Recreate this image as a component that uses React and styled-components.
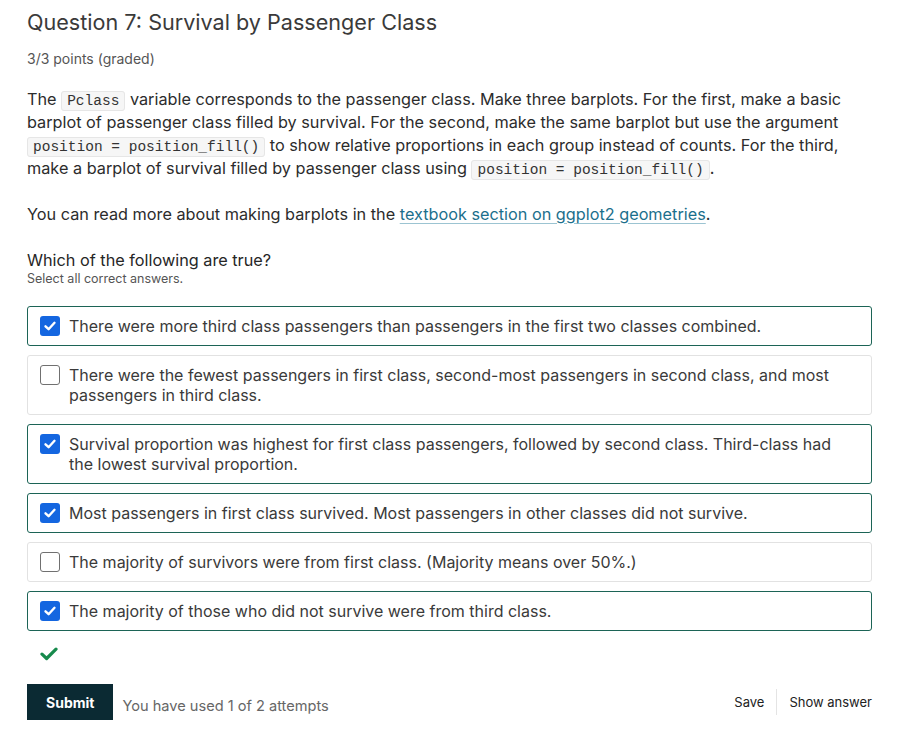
import styled, { createGlobalStyle } from 'styled-components';

const GlobalStyle = createGlobalStyle`
  body {
    margin: 0;
    background: #ffffff;
    font-family: Inter, "Noto Sans", sans-serif;
    color: #2c2c2c;
  }
`;

const options = [
  { id: 1, text: 'There were more third class passengers than passengers in the first two classes combined.', checked: true },
  { id: 2, text: 'There were the fewest passengers in first class, second-most passengers in second class, and most passengers in third class.', checked: false },
  { id: 3, text: 'Survival proportion was highest for first class passengers, followed by second class. Third-class had the lowest survival proportion.', checked: true },
  { id: 4, text: 'Most passengers in first class survived. Most passengers in other classes did not survive.', checked: true },
  { id: 5, text: 'The majority of survivors were from first class. (Majority means over 50%.)', checked: false },
  { id: 6, text: 'The majority of those who did not survive were from third class.', checked: true },
];

const CheckBox = ({ checked }) => (
  <Box $checked={checked}>
    {checked && (
      <svg width="14" height="14" viewBox="0 0 14 14">
        <path d="M2.5 7.3 L5.6 10.2 L11.5 3.8" fill="none" stroke="#fff" strokeWidth="2.4" strokeLinecap="round" strokeLinejoin="round" />
      </svg>
    )}
  </Box>
);

const App = () => {
  return (
    <>
      <GlobalStyle />
      <Wrapper>
        <Title>Question 7: Survival by Passenger Class</Title>
        <Points>3/3 points (graded)</Points>
        <Prose>
          The <Code>Pclass</Code> variable corresponds to the passenger class. Make three barplots. For the first, make a basic
          barplot of passenger class filled by survival. For the second, make the same barplot but use the argument{' '}
          <Code>position = position_fill()</Code> to show relative proportions in each group instead of counts. For the third,
          make a barplot of survival filled by passenger class using <Code>position = position_fill()</Code>.
        </Prose>
        <Prose>
          You can read more about making barplots in the <a href="#">textbook section on ggplot2 geometries</a>.
        </Prose>
        <Prompt>Which of the following are true?</Prompt>
        <Hint>Select all correct answers.</Hint>
        <OptionList>
          {options.map((item) => {
            const { id, text, checked } = item;
            return (
              <Option key={id} $checked={checked}>
                <CheckBox checked={checked} />
                <OptionText>{text}</OptionText>
              </Option>
            );
          })}
        </OptionList>
        <Status>
          <svg width="18" height="14" viewBox="0 0 18 14">
            <path d="M2 7.2 L6.6 11.5 L16 2.2" fill="none" stroke="#178a4c" strokeWidth="3.2" strokeLinecap="round" strokeLinejoin="round" />
          </svg>
        </Status>
        <Actions>
          <Submit>Submit</Submit>
          <Attempts>You have used 1 of 2 attempts</Attempts>
          <Secondary>
            <button>Save</button>
            <Divider />
            <button>Show answer</button>
          </Secondary>
        </Actions>
      </Wrapper>
    </>
  );
};

const Wrapper = styled.main`
  width: 845px;
  padding: 9px 0 16px 27px;
`;

const Title = styled.h2`
  margin: 0;
  font-size: 21.6px;
  font-weight: 400;
  line-height: 26px;
  color: #3a3a3a;
`;

const Points = styled.div`
  margin-top: 14px;
  font-size: 14px;
  line-height: 20px;
  color: #555;
`;

const Prose = styled.p`
  margin: 19px 0 0;
  font-size: 16.25px;
  line-height: 23px;
  color: #2c2c2c;
  & + & {
    margin-top: 23px;
  }
  a {
    color: #1b6f8c;
    text-decoration: underline;
    text-decoration-color: #9cc4d2;
    text-underline-offset: 3px;
  }
`;

const Code = styled.code`
  font-family: "Liberation Mono", "DejaVu Sans Mono", monospace;
  font-size: 14.5px;
  line-height: 14px;
  color: #333;
  background: #f6f6f6;
  border: 1px solid #e6e6e6;
  border-radius: 3px;
  padding: 1px 5px;
`;

const Prompt = styled.div`
  margin-top: 23px;
  font-size: 16.25px;
  line-height: 22px;
  color: #262626;
`;

const Hint = styled.div`
  font-size: 12.5px;
  line-height: 16px;
  color: #555;
`;

const OptionList = styled.div`
  margin-top: 19px;
  display: flex;
  flex-direction: column;
  gap: 9px;
`;

const Option = styled.label`
  display: flex;
  align-items: flex-start;
  gap: 9px;
  padding: 9px 12px;
  border: 1px solid ${(p) => (p.$checked ? '#1c6456' : '#e2e2e2')};
  border-radius: 3px;
  font-size: 16px;
  line-height: 20px;
  color: #3a3a3a;
`;

const OptionText = styled.span`
  flex: 1;
`;

const Box = styled.span`
  flex: 0 0 20px;
  width: 20px;
  height: 20px;
  box-sizing: border-box;
  border-radius: 3px;
  display: flex;
  align-items: center;
  justify-content: center;
  background: ${(p) => (p.$checked ? '#1466e0' : '#fff')};
  border: ${(p) => (p.$checked ? 'none' : '1px solid #707070')};
`;

const Status = styled.div`
  margin-top: 14px;
  padding-left: 13px;
  height: 16px;
`;

const Actions = styled.div`
  margin-top: 23px;
  display: flex;
  align-items: center;
`;

const Submit = styled.button`
  background: #0b2a33;
  color: #fff;
  border: none;
  border-radius: 0;
  height: 36px;
  padding: 0 19px;
  font-family: Inter, sans-serif;
  font-size: 14px;
  font-weight: 700;
`;

const Attempts = styled.span`
  margin-left: 9px;
  margin-top: 8px;
  font-size: 14.6px;
  color: #666;
`;

const Secondary = styled.div`
  margin-left: auto;
  display: flex;
  align-items: center;
  button {
    background: none;
    border: none;
    padding: 0;
    font-family: Inter, sans-serif;
    font-size: 13px;
    color: #222;
  }
`;

const Divider = styled.span`
  width: 1px;
  height: 26px;
  background: #e4e4e4;
  margin: 0 12px;
`;

export default App;
